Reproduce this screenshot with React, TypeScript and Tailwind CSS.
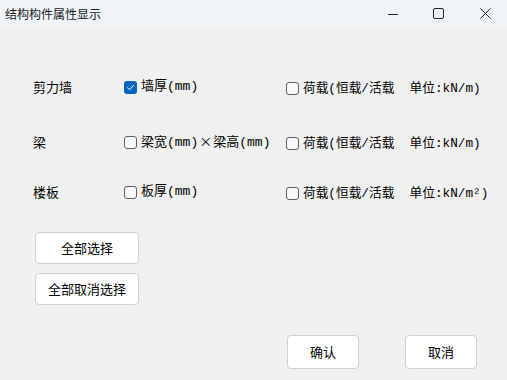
import React from 'react';

// one row of the property grid
interface PropRow {
  label: string;
  size: React.ReactNode;
  sizeChecked: boolean;
  load: string;
  gapTop: string;
}

const cjk = { fontFamily: '"Noto Sans CJK SC", sans-serif' };

const rows: PropRow[] = [
  { label: '剪力墙', size: '墙厚(mm)', sizeChecked: true, load: '荷载(恒载/活载  单位:kN/m)', gapTop: 'mt-[50px]' },
  {
    label: '梁',
    size: (
      <>
        梁宽(mm)<span className="px-[1px]" style={cjk}>×</span>梁高(mm)
      </>
    ),
    sizeChecked: false,
    load: '荷载(恒载/活载  单位:kN/m)',
    gapTop: 'mt-[35px]',
  },
  { label: '楼板', size: '板厚(mm)', sizeChecked: false, load: '荷载(恒载/活载  单位:kN/m²)', gapTop: 'mt-[30px]' },
];

// ascii parts of the option labels render in a fixed-width face
const monoStack = { fontFamily: '"Liberation Mono", "Noto Sans CJK SC", monospace' };

function CheckBox({ checked }: { checked: boolean }) {
  if (checked) {
    return (
      <span className="w-[13px] h-[13px] rounded-[3px] bg-[#0067c0] flex items-center justify-center shrink-0">
        <svg width="9" height="9" viewBox="0 0 9 9" fill="none">
          <path d="M1.5 4.8 L3.6 6.8 L7.5 2.4" stroke="white" strokeWidth="1" strokeLinecap="round" strokeLinejoin="round" />
        </svg>
      </span>
    );
  }
  return <span className="w-[13px] h-[13px] rounded-[3px] border border-[#5f5f5f] bg-[#f8f8f8] shrink-0" />;
}

function Btn({ text, className }: { text: string; className: string }) {
  return (
    <button className={`bg-white border border-[#d0d0d0] rounded-[4px] text-[13px] text-black flex items-center justify-center ${className}`}>
      {text}
    </button>
  );
}

export default function App() {
  return (
    <div
      className="w-[507px] h-[380px] bg-[#f0f0f0] flex flex-col text-black overflow-hidden"
      style={{ fontFamily: '"Noto Sans CJK SC", "Noto Sans", sans-serif' }}
    >
      {/* title bar */}
      <div className="h-[27px] bg-[#eff4f9] flex items-center shrink-0">
        <span className="pl-[5px] text-[12px] text-[#1a1a1a] flex-1">结构构件属性显示</span>
        <div className="flex items-center h-full">
          <svg width="10" height="10" viewBox="0 0 10 10" className="mr-[35px]">
            <path d="M0 5.5 H10" stroke="#222" strokeWidth="1" />
          </svg>
          <svg width="11" height="11" viewBox="0 0 11 11" className="mr-[36px]">
            <rect x="0.5" y="0.5" width="10" height="10" rx="1.5" fill="none" stroke="#222" strokeWidth="1" />
          </svg>
          <svg width="11" height="11" viewBox="0 0 11 11" className="mr-[16px]">
            <path d="M0.5 0.5 L10.5 10.5 M10.5 0.5 L0.5 10.5" stroke="#222" strokeWidth="1" />
          </svg>
        </div>
      </div>

      {/* property rows */}
      <div className="flex flex-col pl-[33px]">
        {rows.map((r) => (
          <div key={r.label} className={`flex items-center h-[20px] text-[13px] ${r.gapTop}`}>
            <span className="w-[91px]">{r.label}</span>
            <div className="w-[162px] flex items-center gap-[4px]">
              <CheckBox checked={r.sizeChecked} />
              <span className="whitespace-nowrap" style={monoStack}>{r.size}</span>
            </div>
            <div className="flex items-center gap-[4px] mt-[3px]">
              <CheckBox checked={false} />
              <span className="whitespace-pre text-[12.7px]" style={monoStack}>{r.load}</span>
            </div>
          </div>
        ))}
      </div>

      {/* select buttons */}
      <div className="flex flex-col pl-[35px] mt-[30px] gap-[9px]">
        <Btn text="全部选择" className="w-[104px] h-[32px]" />
        <Btn text="全部取消选择" className="w-[104px] h-[32px]" />
      </div>

      {/* dialog buttons */}
      <div className="flex pl-[287px] mt-[30px] gap-[46px]">
        <Btn text="确认" className="w-[72px] h-[34px]" />
        <Btn text="取消" className="w-[72px] h-[34px]" />
      </div>
    </div>
  );
}
